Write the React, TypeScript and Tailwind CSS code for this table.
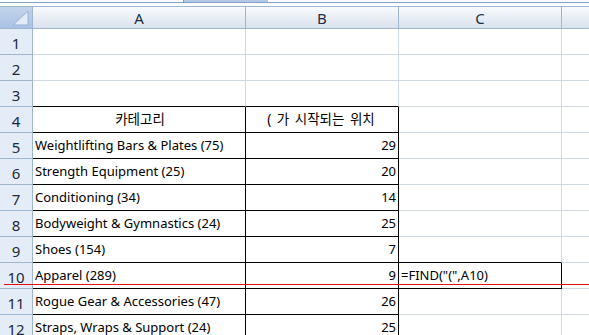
const rows: { n: number; a: string; b: string; c?: string }[] = [
  { n: 1, a: "", b: "" },
  { n: 2, a: "", b: "" },
  { n: 3, a: "", b: "" },
  { n: 4, a: "카테고리", b: "( 가 시작되는 위치" },
  { n: 5, a: "Weightlifting Bars & Plates (75)", b: "29" },
  { n: 6, a: "Strength Equipment (25)", b: "20" },
  { n: 7, a: "Conditioning (34)", b: "14" },
  { n: 8, a: "Bodyweight & Gymnastics (24)", b: "25" },
  { n: 9, a: "Shoes (154)", b: "7" },
  { n: 10, a: "Apparel (289)", b: "9", c: '=FIND("(",A10)' },
  { n: 11, a: "Rogue Gear & Accessories (47)", b: "26" },
  { n: 12, a: "Straps, Wraps & Support (24)", b: "25" },
];

const font = { fontFamily: '"Noto Sans", "Noto Sans CJK KR", sans-serif' };

function ColHead({ label, className }: { label: string; className: string }) {
  return (
    <div
      className={`flex h-full items-center justify-center border-r border-[#9eb6ce] bg-gradient-to-b from-[#f9fbfd] to-[#d9e2ee] pt-px text-[15px] text-[#1d2f45] ${className}`}
    >
      {label}
    </div>
  );
}

function Row({ r }: { r: (typeof rows)[number] }) {
  const inTable = r.n >= 4;
  const bottomBlack = r.n >= 3;
  const header = r.n === 4;
  return (
    <div className="flex h-[26px] shrink-0 text-[13px] leading-[25px] text-black">
      <div className="flex w-[33px] shrink-0 items-center justify-center border-r border-b border-r-[#9eb6ce] border-b-[#9eb6ce] bg-[#e4ecf7] pt-[3px] text-[15px] leading-[22px] text-[#1b2a3c]">
        {r.n}
      </div>
      <div
        className={`w-[213px] shrink-0 overflow-hidden whitespace-nowrap border-r border-b pl-[2px] ${
          inTable ? "border-r-black" : "border-r-[#d0d7e5]"
        } ${bottomBlack ? "border-b-black" : "border-b-[#d0d7e5]"} ${header ? "text-center text-[13.5px]" : ""}`}
      >
        {r.a}
      </div>
      <div
        className={`w-[153px] shrink-0 overflow-hidden whitespace-nowrap border-r border-b pr-[2px] ${
          inTable ? "border-r-black" : "border-r-[#d0d7e5]"
        } ${bottomBlack ? "border-b-black" : "border-b-[#d0d7e5]"} ${
          header ? "text-center text-[13.5px] [word-spacing:2px]" : "text-right"
        }`}
      >
        {r.b}
      </div>
      <div
        className={`w-[163px] shrink-0 whitespace-nowrap border-b pl-[2px] ${
          r.n === 10 ? "border-r border-r-black" : "border-r border-r-[#d0d7e5]"
        } ${r.n === 9 || r.n === 10 ? "border-b-black" : "border-b-[#d0d7e5]"}`}
      >
        {r.c}
      </div>
      <div className="flex-1 border-b border-b-[#d0d7e5]" />
    </div>
  );
}

export default function App() {
  return (
    <div className="relative flex h-[335px] w-[589px] flex-col overflow-hidden bg-white" style={font}>
      {/* strip above the sheet */}
      <div className="flex h-[2px] shrink-0">
        <div className="w-[183px] bg-white" />
        <div className="w-[85px] border-l border-[#7f9cc3] bg-[#b3c8e6]" />
        <div className="flex-1 bg-white" />
      </div>
      <div className="h-px shrink-0 bg-[#87a2c6]" />
      <div className="h-[3px] shrink-0 bg-white" />

      {/* column headers */}
      <div className="flex h-[23px] shrink-0 border-y border-[#9eb6ce]">
        <div className="w-[33px] shrink-0 border-r border-[#9eb6ce] bg-gradient-to-b from-[#c3d4ec] to-[#a9c2e4] p-[2px]">
          <svg viewBox="0 0 28 17" className="h-full w-full">
            <polygon points="26,2 26,16 11,16" fill="#e3ebf6" stroke="#98b1d4" strokeWidth="1" />
          </svg>
        </div>
        <ColHead label="A" className="w-[213px] shrink-0" />
        <ColHead label="B" className="w-[153px] shrink-0" />
        <ColHead label="C" className="w-[163px] shrink-0" />
        <ColHead label="" className="flex-1 border-r-0" />
      </div>

      {rows.map((r) => (
        <Row key={r.n} r={r} />
      ))}

      {/* red annotation line */}
      <div className="absolute left-[4px] right-0 top-[284px] h-px bg-[#e41010]" />
    </div>
  );
}
